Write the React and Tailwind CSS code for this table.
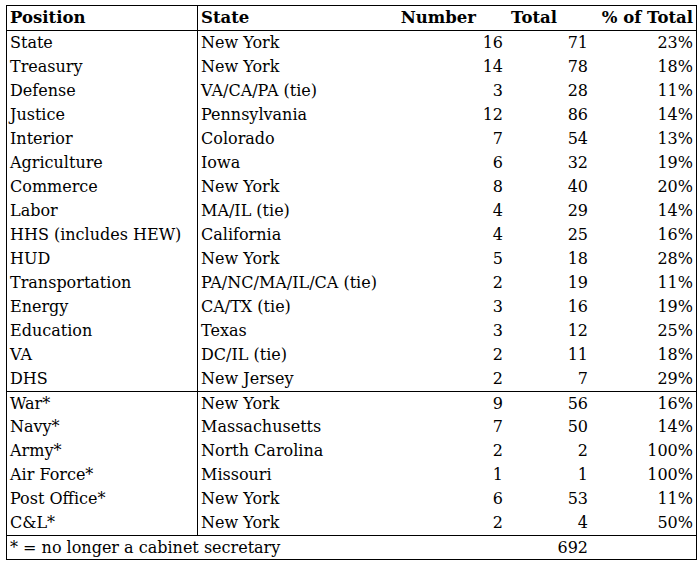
const rows = [
  ["State", "New York", 16, 71, "23%"],
  ["Treasury", "New York", 14, 78, "18%"],
  ["Defense", "VA/CA/PA (tie)", 3, 28, "11%"],
  ["Justice", "Pennsylvania", 12, 86, "14%"],
  ["Interior", "Colorado", 7, 54, "13%"],
  ["Agriculture", "Iowa", 6, 32, "19%"],
  ["Commerce", "New York", 8, 40, "20%"],
  ["Labor", "MA/IL (tie)", 4, 29, "14%"],
  ["HHS (includes HEW)", "California", 4, 25, "16%"],
  ["HUD", "New York", 5, 18, "28%"],
  ["Transportation", "PA/NC/MA/IL/CA (tie)", 2, 19, "11%"],
  ["Energy", "CA/TX (tie)", 3, 16, "19%"],
  ["Education", "Texas", 3, 12, "25%"],
  ["VA", "DC/IL (tie)", 2, 11, "18%"],
  ["DHS", "New Jersey", 2, 7, "29%"],
];

const former = [
  ["War*", "New York", 9, 56, "16%"],
  ["Navy*", "Massachusetts", 7, 50, "14%"],
  ["Army*", "North Carolina", 2, 2, "100%"],
  ["Air Force*", "Missouri", 1, 1, "100%"],
  ["Post Office*", "New York", 6, 53, "11%"],
  ["C&L*", "New York", 2, 4, "50%"],
];

function Row({ r, first }) {
  return (
    <div className={`flex h-[24px] items-center leading-[24px] ${first ? "border-t border-black" : ""}`}>
      <div className="w-[191px] h-full border-r border-black pl-[3px] whitespace-nowrap">{r[0]}</div>
      <div className="w-[222px] pl-[3px] whitespace-nowrap">{r[1]}</div>
      <div className="w-[86px] text-right pr-[3px]">{r[2]}</div>
      <div className="w-[85px] text-right pr-[3px]">{r[3]}</div>
      <div className="w-[105px] text-right pr-[3px]">{r[4]}</div>
    </div>
  );
}

export default function App() {
  return (
    <div className="bg-white min-h-screen pt-[5px] pl-[6px] text-black text-[16px]" style={{ fontFamily: '"DejaVu Serif", serif' }}>
      <div className="w-[691px] border border-black">
        <div className="flex h-[25px] items-center leading-[24px] border-b border-black font-bold text-[16.5px] whitespace-nowrap">
          <div className="w-[191px] h-full border-r border-black pl-[3px]">Position</div>
          <div className="w-[200px] pl-[3px]">State</div>
          <div className="w-[80px] text-right pr-[2px]">Number</div>
          <div className="w-[113px] text-right pr-[34px]">Total</div>
          <div className="w-[105px] text-right pr-[3px]">% of Total</div>
        </div>
        {rows.map((r) => (
          <Row key={r[0]} r={r} />
        ))}
        {former.map((r, i) => (
          <Row key={r[0]} r={r} first={i === 0} />
        ))}
        <div className="flex h-[24px] items-center leading-[24px] border-t border-black">
          <div className="flex-1 pl-[3px] whitespace-nowrap">* = no longer a cabinet secretary</div>
          <div className="w-[85px] text-right pr-[3px]">692</div>
          <div className="w-[105px]"></div>
        </div>
      </div>
    </div>
  );
}
